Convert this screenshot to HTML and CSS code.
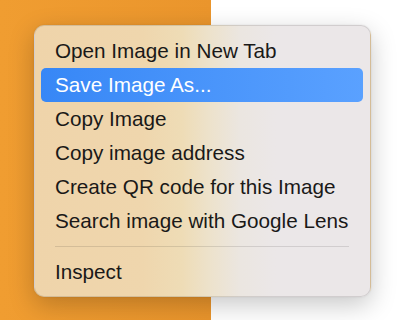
FILE: index.html
```html
<!DOCTYPE html>
<html>

<head>
	<meta charset="UTF-8">
	<link rel="stylesheet" href="styles.css">
</head>

<body>
	<!-- 右键菜单 -->
	<div class="stage">
		<div class="context-menu">
			<div class="menu-item">Open Image in New Tab</div>
			<div class="menu-item active">Save Image As...</div>
			<div class="menu-item">Copy Image</div>
			<div class="menu-item">Copy image address</div>
			<div class="menu-item">Create QR code for this Image</div>
			<div class="menu-item">Search image with Google Lens</div>
			<div class="menu-separator"></div>
			<div class="menu-item">Inspect</div>
		</div>
	</div>
</body>

</html>
```

FILE: styles.css
```css
		html,
		body {
			overflow: hidden;
			width: 100%;
			height: 100%;
			margin: 0;
			padding: 0;
		}

		/* 背景：左侧橙色，右侧白色 */
		.stage {
			width: 100%;
			height: 100%;
			box-sizing: border-box;
			padding: 25px 0 0 34px;
			background: linear-gradient(to right, #f09d31 0, #ea952c 211px, #ffffff 211px);
		}

		/* 菜单容器 */
		.context-menu {
			width: 337px;
			box-sizing: border-box;
			padding: 8px 7px 7px 6px;
			border: 1px solid rgba(0, 0, 0, 0.11);
			border-radius: 10px;
			background: linear-gradient(to right, #efd4aa 0%, #efd6ad 32%, #eedcb6 44%, #ede2cb 52%, #ebe6e0 61%, #ebe7e8 72%, #ebe7e8 100%);
			box-shadow: 0 8px 26px rgba(0, 0, 0, 0.22), 0 0 2px rgba(0, 0, 0, 0.1);
			font-family: "Liberation Sans", Arial, sans-serif;
			font-size: 20.7px;
			color: #1a1918;
		}

		.menu-item {
			height: 34px;
			line-height: 34px;
			padding: 0 14px;
			border-radius: 5px;
			white-space: nowrap;
		}

		/* 选中项 */
		.menu-item.active {
			background: linear-gradient(to right, #3787f6, #5aa1ff);
			color: #ffffff;
		}

		.menu-separator {
			height: 1px;
			margin: 8px 14px 8px;
			background: rgba(0, 0, 0, 0.11);
		}
```
